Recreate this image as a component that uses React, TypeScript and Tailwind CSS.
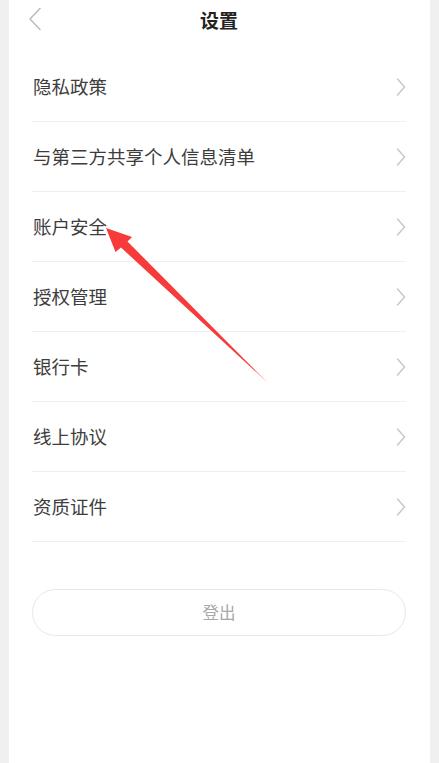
import React from "react";

const items = [
  "隐私政策",
  "与第三方共享个人信息清单",
  "账户安全",
  "授权管理",
  "银行卡",
  "线上协议",
  "资质证件",
];

function ChevronRight() {
  return (
    <svg width="10" height="18" viewBox="0 0 10 18" fill="none">
      <polyline
        points="1.5,1 8.5,9 1.5,17"
        stroke="#c6c6c6"
        strokeWidth="1.4"
        strokeLinecap="round"
        strokeLinejoin="round"
      />
    </svg>
  );
}

export default function App(): React.JSX.Element {
  return (
    <div
      className="relative flex min-h-[763px] w-full bg-[#f0f0f0] px-[9px]"
      style={{ fontFamily: '"Noto Sans CJK SC", "Noto Sans", sans-serif' }}
    >
      <div className="flex flex-1 flex-col bg-white pl-[23px] pr-[24px]">
        <div className="relative flex h-[40px] items-center justify-center">
          <svg
            className="absolute left-[-4px] top-[7px]"
            width="14"
            height="24"
            viewBox="0 0 14 24"
            fill="none"
          >
            <polyline
              points="12,1.5 2,12 12,22.5"
              stroke="#bdbdbd"
              strokeWidth="1.6"
              strokeLinecap="round"
              strokeLinejoin="round"
            />
          </svg>
          <span className="text-[19px] font-bold text-[#222]">设置</span>
        </div>

        <div className="mt-[12px] flex flex-col">
          {items.map((label) => (
            <div
              key={label}
              className="flex h-[70px] items-center justify-between border-b border-[#efefef]"
            >
              <span className="pl-[1px] text-[18.5px] text-[#3d3d3d]">{label}</span>
              <ChevronRight />
            </div>
          ))}
        </div>

        <button
          type="button"
          className="mt-[47px] flex h-[47px] w-full items-center justify-center rounded-full border border-[#e8e8e8] bg-white text-[16.5px] text-[#a8a8a8]"
        >
          登出
        </button>
      </div>

      <svg
        className="pointer-events-none absolute left-0 top-0"
        width="439"
        height="763"
        viewBox="0 0 439 763"
      >
        <polygon
          points="106,228 132,237 127.5,241.5 268,383 121,247.5 115.5,252"
          fill="#f73a3a"
        />
      </svg>
    </div>
  );
}
